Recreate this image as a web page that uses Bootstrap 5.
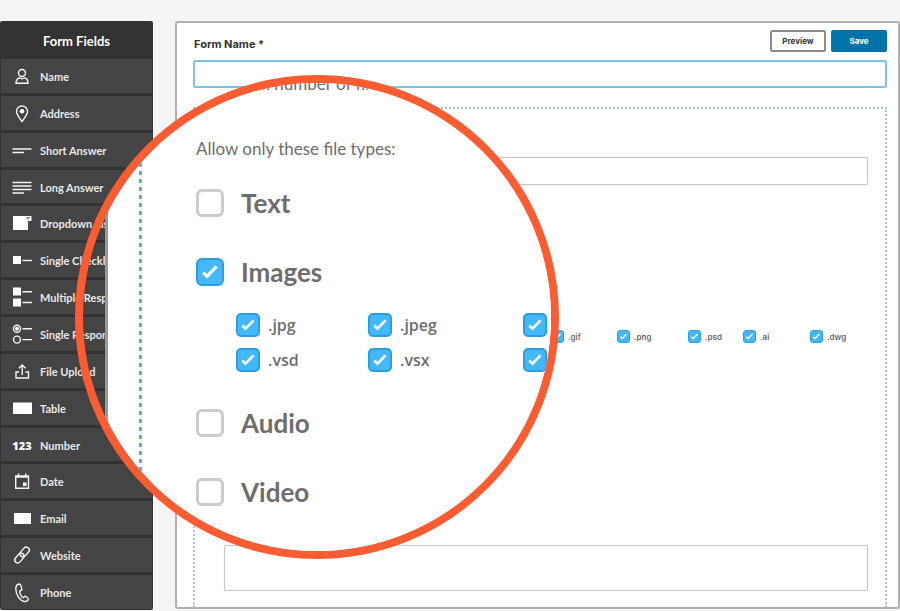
<!DOCTYPE html>
<html lang="en">
<head>
<meta charset="utf-8">
<meta name="viewport" content="width=device-width, initial-scale=1">
<title>Form Builder</title>
<link href="https://cdn.jsdelivr.net/npm/bootstrap@5.3.0/dist/css/bootstrap.min.css" rel="stylesheet">
<style>
  body { background: #f5f5f5; font-family: Lato, "Open Sans", sans-serif; }
  .builder { min-height: 100vh; padding: 21px 0 1px; gap: 22px; }

  /* Field palette */
  .palette { width: 153px; background: #333; border-radius: 2px; padding: 0 1px 1px; }
  .palette-title { height: 38px; line-height: 40px; font-size: 13px; font-weight: 700; color: #fff; }
  .palette-items { gap: 3px; }
  .field-btn { flex: 1 1 0; min-height: 24px; background: #444; color: #e8e8e8; border: 0; padding: 2px 0 0 10px; gap: 7px; font-size: 11px; font-weight: 700; line-height: 16px; }
  .field-btn svg { width: 22px; height: 22px; flex: none; fill: none; stroke: #f4f4f4; stroke-width: 1.4; }
  .field-btn .solid { fill: #fff; stroke: none; }
  .digits { width: 22px; font-family: "Open Sans", sans-serif; font-weight: 800; font-size: 11px; text-align: center; color: #fff; }

  /* Canvas */
  .sheet { background: #fff; border: 2px solid #b0b0b0; border-radius: 3px; padding: 6px 11px 0 16px; margin-bottom: 1px; min-width: 0; }
  .name-label { font-family: Inter, sans-serif; font-size: 11px; font-weight: 700; line-height: 14px; color: #333; padding: 8px 0 0 1px; }
  .top-actions { gap: 5px; padding-top: 1px; }
  .top-btn { width: 56px; height: 22px; padding: 0; font-family: Inter, sans-serif; font-size: 8px; font-weight: 700; line-height: 12px; border-radius: 2px; }
  .btn-preview { border: 2px solid #8c8c8c; color: #333; background: #fff; }
  .btn-save { border: 0; background: #0073ab; color: #fff; }
  .name-input { height: 28px; margin-top: 8px; border: 2px solid #7cc3eb; border-radius: 2px; }
  .drop-zone { margin-top: 19px; padding: 48px 17px 16px 29px; border: 2px dotted #a3c8d8; border-bottom: 0; }
  .plain-input { border: 1px solid #c6c6c6; border-radius: 2px; box-shadow: 0 0 1px #ccc; }
  .short-box { height: 28px; }
  .long-box { height: 46px; resize: none; }
  .type-row { display: grid; grid-template-columns: 66px 71px 55px 67px 58px; justify-content: end; margin-top: 145px; }

  /* Tick boxes */
  .form-check-input.tick { margin: 0; float: none; flex: none; background-color: #fff; border: 2px solid #ccc; }
  .form-check-input.tick:checked { border-color: #2b9fdc; background-color: #43b8fc;
    background-image: url("data:image/svg+xml,%3csvg xmlns='http://www.w3.org/2000/svg' viewBox='0 0 20 20'%3e%3cpath fill='none' stroke='%23fff' stroke-width='2.6' d='M4.300 10.500l3.200 3.200L15.500 5.300'/%3e%3c/svg%3e"); }
  .tick-sm { width: 13px; height: 13px; }
  .form-check-input.tick-sm { border-width: 1px; border-radius: 3px; }
  .tick-md { width: 24px; height: 24px; }
  .form-check-input.tick-md { border-radius: 5px; }
  .tick-lg { width: 28px; height: 28px; }
  .form-check-input.tick-lg { border-width: 3px; border-radius: 6px; }
  .form-check-input.tick-lg:checked { border-width: 2px; }
  .type-label { font-family: Inter, sans-serif; font-size: 8px; font-weight: 600; line-height: 12px; color: #666; margin-left: 4px; }

  /* Magnifier */
  .lens { position: absolute; left: 75px; top: 75px; width: 484px; height: 484px; border: 8px solid #fb5c31; border-radius: 50%; overflow: hidden; color: #6d6d6d; }
  .lens-page { height: 100%; margin-left: 22px; border-left: 3px solid #999; background: #fff; padding-left: 31px; }
  .lens-zone { height: 100%; padding-left: 57px; background: repeating-linear-gradient(#68a9cc 0 4px, #fff 4px 8px) left / 3px 100% no-repeat; }
  .lens-text { font-size: 17px; line-height: 24px; }
  .lens-first { height: 6px; }
  .lens-first label { margin-top: -11px; }
  .lens-count { height: 28px; width: 60px; border: 3px solid #999; border-radius: 4px; margin: -11px 0 0 12px; padding: 0; }
  .lens-intro { margin: 48px 0 28px; }
  .lens-option { height: 28px; gap: 17px; font-size: 26px; font-weight: 700; line-height: 28px; margin-bottom: 41px; }
  .lens-types { display: grid; grid-template-columns: 132px 155px 24px; row-gap: 11px; margin: -14px 0 37px 40px; }
  .lens-types label { font-family: "Open Sans", sans-serif; font-size: 16px; font-weight: 600; line-height: 24px; margin-left: 8px; }
</style>
</head>
<body>
<div class="builder d-flex align-items-stretch">

  <nav class="palette d-flex flex-column flex-shrink-0" aria-label="Form fields">
    <h1 class="palette-title text-center m-0">Form Fields</h1>
    <div class="palette-items d-flex flex-column flex-fill">
      <button type="button" class="field-btn d-flex align-items-center">
        <svg viewBox="0 0 22 22"><circle cx="11" cy="7" r="3.5"/><path d="M5 17.3c0-3.8 2-5.3 3.7-5.3 1.3.8 3.300.8 4.600 0 1.700 0 3.700 1.500 3.700 5.300z"/></svg>Name</button>
      <button type="button" class="field-btn d-flex align-items-center">
        <svg viewBox="0 0 22 22"><path d="M11 18.500C8 14.500 5.500 11.500 5.500 8.500a5.500 5.500 0 0 1 11 0c0 3-2.500 6-5.500 10z"/><circle class="solid" cx="11" cy="8.300" r="2.300"/></svg>Address</button>
      <button type="button" class="field-btn d-flex align-items-center">
        <svg viewBox="0 0 22 22"><path d="M1.500 9h19M1.500 12.500h11.500"/></svg>Short Answer</button>
      <button type="button" class="field-btn d-flex align-items-center">
        <svg viewBox="0 0 22 22"><path d="M1.500 5.500h19M1.500 9h19M1.500 12.500h19M1.500 16h11.500"/></svg>Long Answer</button>
      <button type="button" class="field-btn d-flex align-items-center">
        <svg viewBox="0 0 22 22"><path class="solid" d="M2 3h18.500v5H17v9H2z"/><path d="M15.300 4.700h3.400l-1.700 1.600z" stroke="#555" stroke-width=".8"/></svg>Dropdown List</button>
      <button type="button" class="field-btn d-flex align-items-center">
        <svg viewBox="0 0 22 22"><path class="solid" d="M2 6h8v8H2z"/><path d="M11.500 10.500h9.500"/></svg>Single Checkbox</button>
      <button type="button" class="field-btn d-flex align-items-center">
        <svg viewBox="0 0 22 22"><path class="solid" d="M2 .5h8v8H2zM2 11.500h8v8H2z"/><path d="M11.500 4.700h9.500M11.500 15.500h9.500"/></svg>Multiple Response</button>
      <button type="button" class="field-btn d-flex align-items-center">
        <svg viewBox="0 0 22 22"><circle cx="6" cy="4.800" r="3.500"/><circle class="solid" cx="6" cy="4.800" r="2"/><circle cx="6" cy="15.600" r="3.500"/><path d="M11.500 4.800h9.500M11.500 15.600h9.500"/></svg>Single Response</button>
      <button type="button" class="field-btn d-flex align-items-center">
        <svg viewBox="0 0 22 22"><path d="M8 11H5v6h12.500v-6h-3M11.200 14v-10M7.800 7.300l3.400-3.400 3.400 3.400"/></svg>File Upload</button>
      <button type="button" class="field-btn d-flex align-items-center">
        <svg viewBox="0 0 22 22"><path class="solid" d="M2 4.500h19v11.500H2z"/></svg>Table</button>
      <button type="button" class="field-btn d-flex align-items-center">
        <span class="digits" aria-hidden="true">123</span>Number</button>
      <button type="button" class="field-btn d-flex align-items-center">
        <svg viewBox="0 0 22 22"><path d="M4.700 5h12.800v12.300H4.700zM4.700 6h12.800M7.500 2.500V5M14.700 2.500V5"/><path class="solid" d="M12 11.500h3.500V15H12z"/></svg>Date</button>
      <button type="button" class="field-btn d-flex align-items-center">
        <svg viewBox="0 0 22 22"><path class="solid" d="M3 5h17v11H3z"/></svg>Email</button>
      <button type="button" class="field-btn d-flex align-items-center">
        <svg viewBox="0 0 22 22"><g transform="rotate(-49 11 10)"><rect x="1.500" y="7" width="11" height="6" rx="3"/><rect x="9.500" y="7" width="11" height="6" rx="3"/></g></svg>Website</button>
      <button type="button" class="field-btn d-flex align-items-center">
        <svg viewBox="0 0 22 22"><path d="M8.500 2c-2 .2-3.700 1.800-3.700 4.800 0 6 4 12.200 8.700 12.700 2 .2 3.500-.8 3.900-2.400.2-.8-3-3.200-3.900-2.800-.8.400-.8 1.500-1.600 1.300-1.400-.4-3.600-5.200-3.200-6.500.3-.9 1.800-.2 2.100-1.100.3-1-1-6-2.300-6z"/></svg>Phone</button>
    </div>
  </nav>

  <main class="sheet d-flex flex-column flex-fill">
    <div class="d-flex justify-content-between">
      <label class="name-label" for="formName">Form Name *</label>
      <div class="top-actions d-flex">
        <button type="button" class="btn top-btn btn-preview">Preview</button>
        <button type="button" class="btn top-btn btn-save">Save</button>
      </div>
    </div>
    <input type="text" id="formName" class="name-input w-100">
    <section class="drop-zone d-flex flex-column flex-fill" aria-label="Form canvas">
      <input type="text" class="plain-input short-box w-100" aria-label="Short answer">
      <div class="type-row">
        <div class="d-flex align-items-center"><input class="form-check-input tick tick-sm" type="checkbox" id="gif" checked><label class="type-label" for="gif">.gif</label></div>
        <div class="d-flex align-items-center"><input class="form-check-input tick tick-sm" type="checkbox" id="png" checked><label class="type-label" for="png">.png</label></div>
        <div class="d-flex align-items-center"><input class="form-check-input tick tick-sm" type="checkbox" id="psd" checked><label class="type-label" for="psd">.psd</label></div>
        <div class="d-flex align-items-center"><input class="form-check-input tick tick-sm" type="checkbox" id="ai" checked><label class="type-label" for="ai">.ai</label></div>
        <div class="d-flex align-items-center"><input class="form-check-input tick tick-sm" type="checkbox" id="dwg" checked><label class="type-label" for="dwg">.dwg</label></div>
      </div>
      <textarea class="plain-input long-box w-100 mt-auto" aria-label="Long answer"></textarea>
    </section>
  </main>
</div>

<div class="lens">
  <div class="lens-page">
    <div class="lens-zone">
      <div class="lens-text lens-first d-flex">
        <label for="fileCount" class="text-nowrap">Maximum number of files:</label>
        <input class="lens-count" type="text" id="fileCount">
      </div>
      <p class="lens-text lens-intro">Allow only these file types:</p>
      <div class="lens-option d-flex align-items-center"><input class="form-check-input tick tick-lg" type="checkbox" id="tText"><label for="tText">Text</label></div>
      <div class="lens-option d-flex align-items-center"><input class="form-check-input tick tick-lg" type="checkbox" id="tImages" checked><label for="tImages">Images</label></div>
      <div class="lens-types">
        <div class="d-flex"><input class="form-check-input tick tick-md" type="checkbox" id="jpg" checked><label for="jpg">.jpg</label></div>
        <div class="d-flex"><input class="form-check-input tick tick-md" type="checkbox" id="jpeg" checked><label for="jpeg">.jpeg</label></div>
        <input class="form-check-input tick tick-md" type="checkbox" checked aria-label=".gif">
        <div class="d-flex"><input class="form-check-input tick tick-md" type="checkbox" id="vsd" checked><label for="vsd">.vsd</label></div>
        <div class="d-flex"><input class="form-check-input tick tick-md" type="checkbox" id="vsx" checked><label for="vsx">.vsx</label></div>
        <input class="form-check-input tick tick-md" type="checkbox" checked aria-label=".png">
      </div>
      <div class="lens-option d-flex align-items-center"><input class="form-check-input tick tick-lg" type="checkbox" id="tAudio"><label for="tAudio">Audio</label></div>
      <div class="lens-option d-flex align-items-center"><input class="form-check-input tick tick-lg" type="checkbox" id="tVideo"><label for="tVideo">Video</label></div>
    </div>
  </div>
</div>
<script src="https://cdn.jsdelivr.net/npm/bootstrap@5.3.0/dist/js/bootstrap.bundle.min.js"></script>
</body>
</html>
